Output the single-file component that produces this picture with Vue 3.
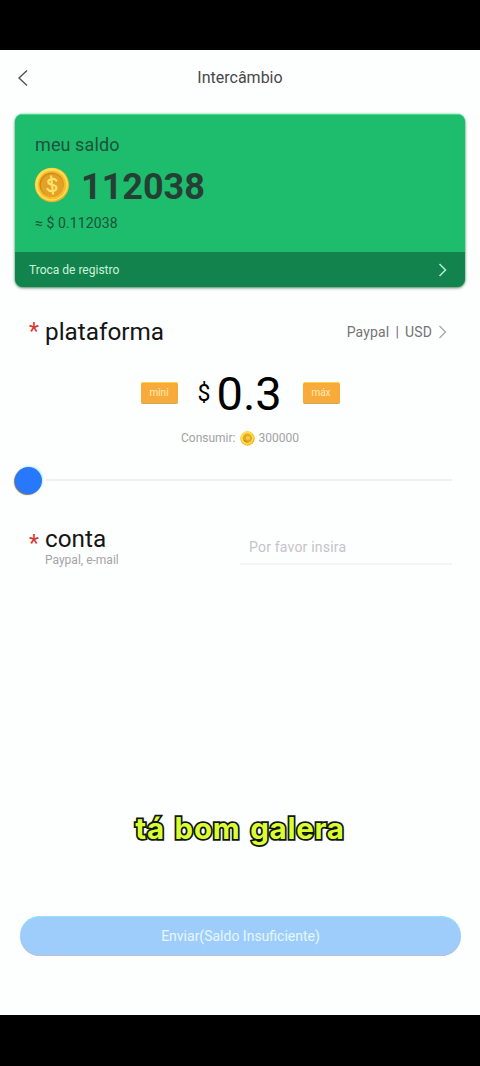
<script setup>
const saldo = '112038'
const consumo = '300000'
</script>

<template>
  <div class="screen">
    <div class="status"></div>
    <header class="header">
      <svg class="back" width="12" height="18" viewBox="0 0 12 18"><path d="M10 1.5 2 9l8 7.5" fill="none" stroke="#505050" stroke-width="1.4" /></svg>
      <h1 class="title">Intercâmbio</h1>
    </header>

    <section class="card">
      <div class="card-body">
        <div class="label">meu saldo</div>
        <div class="amount">
          <svg class="coin" width="36" height="36" viewBox="0 0 36 36">
            <circle cx="18" cy="18" r="17.2" fill="#e9b02a" />
            <circle cx="17.6" cy="17.4" r="16.4" fill="#ffdc50" />
            <circle cx="18" cy="18" r="14.2" fill="#f5bd2c" />
            <circle cx="17.6" cy="17.6" r="12.2" fill="#cf8a1c" />
            <circle cx="18.2" cy="18.4" r="11.3" fill="#e3a128" />
            <path d="M22.4 13.7c-1.2-1.6-3-2.1-5-1.7-2.6.5-3.8 2.5-2.7 4.2 1.2 1.8 5 1.3 6.9 2.9 1.8 1.7.6 4.3-2.3 4.9-2.3.5-4.7-.2-5.9-2M17.1 9.4l1.9 17.2" fill="none" stroke="#ffe26a" stroke-width="2.2" stroke-linecap="round" />
          </svg>
          <span class="number">{{ saldo }}</span>
        </div>
        <div class="approx">≈ $ 0.112038</div>
      </div>
      <div class="card-foot">
        <span>Troca de registro</span>
        <svg width="9" height="14" viewBox="0 0 9 14"><path d="m1.5 1 6 6-6 6" fill="none" stroke="#b5edcc" stroke-width="1.5" /></svg>
      </div>
    </section>

    <section class="platform">
      <span class="star">*</span>
      <span class="heading">plataforma</span>
      <span class="method"><span>Paypal</span><span>|</span><span>USD</span></span>
      <svg width="9" height="14" viewBox="0 0 9 14"><path d="m1.5 1 6 6-6 6" fill="none" stroke="#a8a8a8" stroke-width="1.4" /></svg>
    </section>

    <section class="value">
      <span class="tag">mini</span>
      <span class="price"><span class="currency">$</span><span class="big">0.3</span></span>
      <span class="tag">máx</span>
    </section>

    <div class="consume">
      <span>Consumir:</span>
      <svg width="15" height="15" viewBox="0 0 15 15">
        <circle cx="7.5" cy="7.5" r="7.2" fill="#f1b628" />
        <circle cx="7.2" cy="7" r="6.5" fill="#ffdf4b" />
        <circle cx="7.4" cy="7.3" r="4.7" fill="#e3aa24" />
        <circle cx="8" cy="7" r="2.1" fill="#f5cc48" />
        <path d="M4 9.3 7 11" fill="none" stroke="#c98e1c" stroke-width="1.2" />
      </svg>
      <span>{{ consumo }}</span>
    </div>

    <div class="slider"><span class="knob"></span><span class="track"></span></div>

    <section class="account">
      <span class="star">*</span>
      <div class="account-name">
        <span class="heading">conta</span>
        <span class="hint">Paypal, e-mail</span>
      </div>
      <div class="field">Por favor insira</div>
    </section>

    <p class="caption">tá bom galera</p>

    <button class="submit">Enviar(Saldo Insuficiente)</button>
    <div class="nav"></div>
  </div>
</template>

<style>
body { margin: 0; background: #000; }
</style>

<style scoped>
.screen {
  width: 480px;
  height: 1066px;
  display: flex;
  flex-direction: column;
  background: #fdfefe;
  font-family: Roboto, "Liberation Sans", sans-serif;
  overflow: hidden;
}
.screen * { box-sizing: border-box; white-space: nowrap; }
.screen svg { flex: none; display: block; }
.status { height: 50px; background: #000; flex: none; }
.header {
  height: 64px;
  flex: none;
  display: grid;
  grid-template-columns: 40px 1fr 40px;
  align-items: center;
  padding-bottom: 9px;
}
.back { margin-left: 17px; }
.title { margin: 0; text-align: center; font-size: 16px; font-weight: 400; color: #484848; }
.card {
  flex: none;
  height: 173px;
  margin: 0 15px;
  border-radius: 8px;
  overflow: hidden;
  background: #1dbd6d;
  box-shadow: 0 1px 3px rgba(20, 60, 40, .65), 0 0 2px #6effac;
  display: flex;
  flex-direction: column;
}
.card-body {
  flex: 1;
  padding: 19px 20px 0;
  color: #1d523a;
  border-top: 1px solid #45df8c;
  display: flex;
  flex-direction: column;
}
.label { height: 22px; line-height: 22px; font-size: 18px; letter-spacing: .1px; }
.amount { display: flex; align-items: center; height: 42px; margin-top: 9px; }
.coin { margin: -3px 1px 0 -1px; }
.number { margin-left: 10px; padding-top: 1px; font-size: 36px; font-weight: 700; color: #263f35; }
.approx { margin-top: 6px; line-height: 20px; font-size: 14px; letter-spacing: .1px; }
.card-foot {
  height: 35px;
  flex: none;
  padding: 0 18px 0 14px;
  display: flex;
  align-items: center;
  justify-content: space-between;
  background: #13834e;
  color: #c8f5da;
  font-size: 12px;
}
.platform { flex: none; height: 88px; margin-top: 1px; padding: 0 33px 0 29px; display: flex; align-items: center; }
.star { width: 16px; flex: none; font-size: 23px; line-height: 28px; color: #d5382f; }
.platform .star { margin-top: -1px; }
.heading { font-size: 24.3px; line-height: 30px; color: #151515; }
.method { margin-left: auto; margin-right: 6px; display: flex; gap: 6px; font-size: 14px; color: #747474; letter-spacing: .15px; }
.value { flex: none; height: 46px; display: flex; justify-content: center; align-items: center; margin-top: -6px; }
.tag {
  height: 22px;
  width: 37px;
  border-radius: 2px;
  background: #f8ab3b;
  border-top: 1px solid #ffd04a;
  border-bottom: 1px solid #cca568;
  color: #ffedb8;
  font-size: 10px;
  line-height: 20px;
  text-align: center;
}
.price { width: 125px; display: flex; align-items: center; padding-left: 20px; color: #000; }
.currency { width: 19px; font-size: 23px; }
.big { font-size: 47px; line-height: 46px; padding-top: 1px; }
.consume { flex: none; height: 20px; margin-top: 12px; display: flex; justify-content: center; align-items: center; gap: 4px; font-size: 12px; color: #a2a2a5; }
.slider { flex: none; height: 28px; margin: 18px 28px 0 15px; display: flex; align-items: center; }
.knob { width: 27px; height: 27px; border-radius: 50%; background: #2878fc; box-shadow: -1px 1px 1px #707078, 1px -1px 2px #b6f0ff; }
.track { flex: 1; height: 2px; background: #f0eef2; margin-left: 4px; }
.account { flex: none; height: 56px; margin: 30px 28px 0 29px; display: flex; align-items: flex-start; }
.account .star { margin-top: 6px; }
.account-name { width: 195px; display: flex; flex-direction: column; }
.hint { margin-top: -1px; font-size: 12px; line-height: 14px; color: #a4a4a6; }
.field { flex: 1; height: 41px; padding: 0 9px; border-bottom: 2px solid #f6f3f7; font-size: 14px; line-height: 46px; color: #c5c4c7; letter-spacing: .2px; }
.caption {
  flex: none;
  margin: 228px 0 0;
  height: 40px;
  line-height: 40px;
  text-align: center;
  font-family: Inter, "Open Sans", sans-serif;
  font-weight: 700;
  font-size: 29.5px;
  letter-spacing: .75px;
  word-spacing: 2px;
  color: #dcff32;
  -webkit-text-stroke: 3.5px #10140c;
  paint-order: stroke fill;
}
.submit {
  flex: none;
  height: 40px;
  margin: 68px 19px 0 20px;
  padding: 0;
  border: 0;
  border-radius: 20px;
  background: #9fcdfb;
  box-shadow: inset 0 1px 0 #91e4ff, inset 0 -1px 0 #bcbed2;
  color: #e5f8ff;
  font-family: inherit;
  font-size: 14px;
}
.nav { height: 51px; flex: none; margin-top: auto; background: #000; }
</style>
